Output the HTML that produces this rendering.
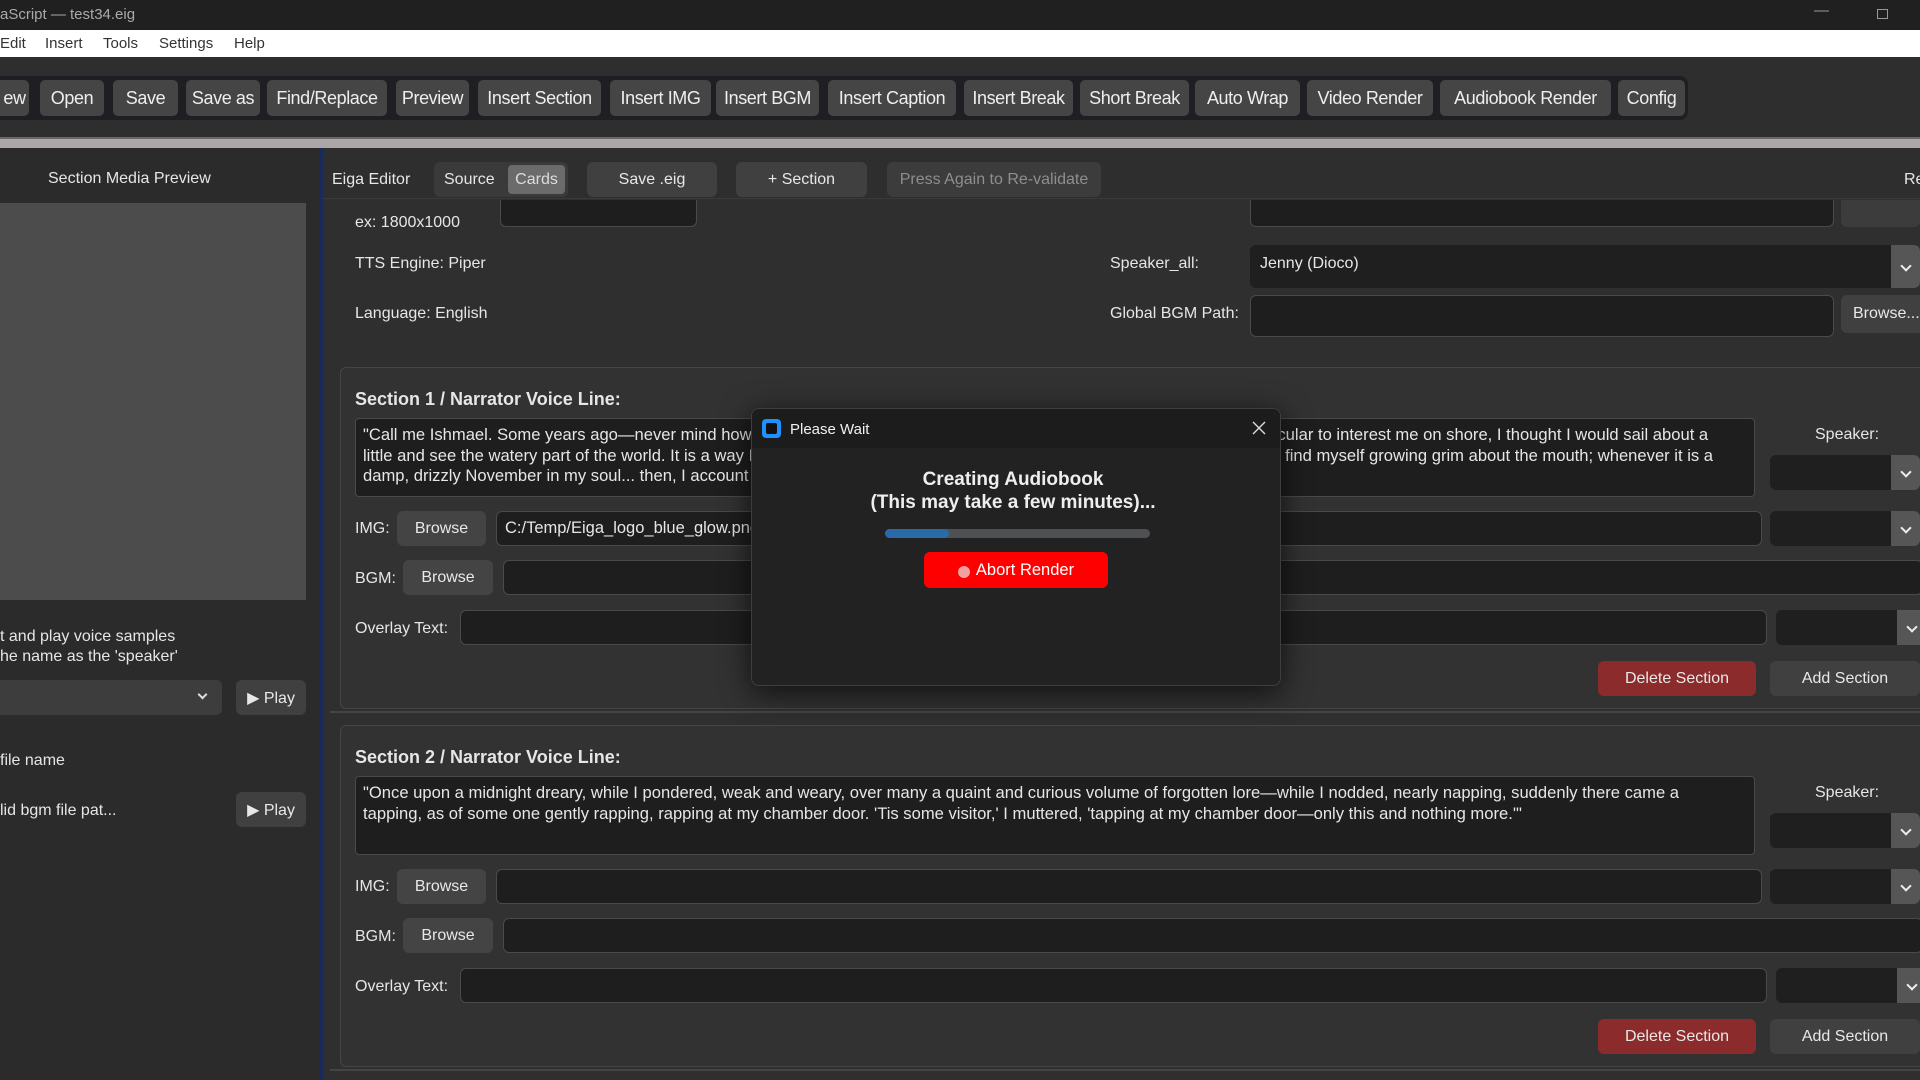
<!DOCTYPE html>
<html><head><meta charset="utf-8"><style>
*{box-sizing:border-box;margin:0;padding:0}
body{width:1920px;height:1080px;overflow:hidden;background:#2f2f2f;font-family:"Liberation Sans",sans-serif;color:#e6e6e6;position:relative}
.a{position:absolute}
.tb{position:absolute;top:80px;height:36px;background:#454545;border-radius:5px;color:#eee;font-size:18px;letter-spacing:-0.4px;display:flex;align-items:center;justify-content:center;white-space:nowrap}
.btn{position:absolute;background:#444;border-radius:6px;color:#e8e8e8;font-size:16px;display:flex;align-items:center;justify-content:center;white-space:nowrap}
.inp{position:absolute;background:#1e1e1e;border:1px solid #4a4a4a;border-radius:6px}
.dd{position:absolute;background:#1f1f1f;border-radius:6px;overflow:hidden}
.dd:after{content:"";position:absolute;right:0;top:0;width:29px;height:100%;background:#565656}
.dd:before{content:"";position:absolute;right:10px;top:50%;width:6px;height:6px;margin-top:-5px;border-right:2px solid #eee;border-bottom:2px solid #eee;transform:rotate(45deg);z-index:2}
.lbl{position:absolute;font-size:16px;color:#e6e6e6;white-space:nowrap}
.card{position:absolute;left:340px;width:1600px;height:342px;background:#323232;border:1px solid #464646;border-radius:6px}
.ta{position:absolute;background:#1e1e1e;border:1px solid #4a4a4a;border-radius:4px;font-size:16.6px;line-height:20.5px;padding:6px 7px;color:#e6e6e6;white-space:nowrap;overflow:hidden}
</style></head><body>
<div class="a" style="left:0;top:0;width:1920px;height:30px;background:#202020"></div>
<div class="lbl" style="left:0;top:6px;font-size:15px;color:#aaa">aScript — test34.eig</div>
<div class="lbl" style="left:1814px;top:2px;font-size:15px;color:#999">—</div>
<div class="a" style="left:1877px;top:9px;width:11px;height:10px;border:1px solid #999"></div>
<div class="a" style="left:0;top:30px;width:1920px;height:27px;background:#fff"></div>
<div class="lbl" style="left:0;top:35px;font-size:15px;color:#333">Edit</div>
<div class="lbl" style="left:45px;top:35px;font-size:15px;color:#333">Insert</div>
<div class="lbl" style="left:103px;top:35px;font-size:15px;color:#333">Tools</div>
<div class="lbl" style="left:159px;top:35px;font-size:15px;color:#333">Settings</div>
<div class="lbl" style="left:234px;top:35px;font-size:15px;color:#333">Help</div>
<div class="a" style="left:0;top:57px;width:1920px;height:80px;background:#2e2e2e"></div>
<div class="a" style="left:0;top:76px;width:1688px;height:44px;background:#1f1f23;border-radius:0 8px 8px 0"></div>
<div class="tb" style="left:0;width:29px;border-radius:0 5px 5px 0">ew</div>
<div class="tb" style="left:40px;width:64px">Open</div>
<div class="tb" style="left:113px;width:65px">Save</div>
<div class="tb" style="left:186px;width:74px">Save as</div>
<div class="tb" style="left:267px;width:120px">Find/Replace</div>
<div class="tb" style="left:396px;width:73px">Preview</div>
<div class="tb" style="left:478px;width:123px">Insert Section</div>
<div class="tb" style="left:610px;width:101px">Insert IMG</div>
<div class="tb" style="left:716px;width:103px">Insert BGM</div>
<div class="tb" style="left:828px;width:128px">Insert Caption</div>
<div class="tb" style="left:964px;width:109px">Insert Break</div>
<div class="tb" style="left:1080px;width:109px">Short Break</div>
<div class="tb" style="left:1195px;width:105px">Auto Wrap</div>
<div class="tb" style="left:1307px;width:126px">Video Render</div>
<div class="tb" style="left:1440px;width:171px">Audiobook Render</div>
<div class="tb" style="left:1618px;width:67px">Config</div>
<div class="a" style="left:0;top:137px;width:1920px;height:11px;background:#aca6a6;border-top:2px solid #6a6666"></div>
<!-- left panel -->
<div class="a" style="left:0;top:148px;width:320px;height:932px;background:#2b2b2b"></div>
<div class="a" style="left:320px;top:148px;width:3px;height:932px;background:#1a2a5e"></div>
<div class="lbl" style="left:48px;top:170px;font-size:16px">Section Media Preview</div>
<div class="a" style="left:0;top:203px;width:306px;height:397px;background:#4c4c4c"></div>
<div class="lbl" style="left:0;top:627px;line-height:20px">t and play voice samples<br>he name as the 'speaker'</div>
<div class="a" style="left:0;top:680px;width:222px;height:35px;background:#3d3d3d;border-radius:0 6px 6px 0"></div>
<div class="a" style="left:199px;top:691px;width:7px;height:7px;border-right:2px solid #ddd;border-bottom:2px solid #ddd;transform:rotate(45deg)"></div>
<div class="btn" style="left:236px;top:680px;width:70px;height:35px;background:#404040;font-size:16px">▶ Play</div>
<div class="lbl" style="left:0;top:752px">file name</div>
<div class="lbl" style="left:0;top:802px">lid bgm file pat...</div>
<div class="btn" style="left:236px;top:792px;width:70px;height:35px;background:#404040">▶ Play</div>
<!-- editor header -->
<div class="a" style="left:323px;top:148px;width:1597px;height:51px;background:#2e2e2e;border-bottom:1px solid #3a3a3a"></div>
<div class="lbl" style="left:332px;top:171px">Eiga Editor</div>
<div class="a" style="left:434px;top:162px;width:134px;height:35px;background:#3a3a3a;border-radius:6px"></div>
<div class="lbl" style="left:444px;top:171px">Source</div>
<div class="btn" style="left:508px;top:165px;width:57px;height:29px;background:#6b6b6b;border-radius:4px;color:#ddd">Cards</div>
<div class="btn" style="left:587px;top:162px;width:130px;height:35px;background:#404040">Save .eig</div>
<div class="btn" style="left:736px;top:162px;width:131px;height:35px;background:#404040">+ Section</div>
<div class="btn" style="left:887px;top:162px;width:214px;height:35px;background:#3c3c3c;color:#8e8e8e">Press Again to Re-validate</div>
<div class="lbl" style="left:1904px;top:171px">Re</div>
<!-- globals -->
<div class="lbl" style="left:355px;top:214px">ex: 1800x1000</div>
<div class="inp" style="left:500px;top:200px;width:197px;height:27px;border-top:none;border-radius:0 0 6px 6px"></div>
<div class="inp" style="left:1250px;top:200px;width:584px;height:27px;border-top:none;border-radius:0 0 6px 6px"></div>
<div class="a" style="left:1841px;top:200px;width:79px;height:27px;background:#3c3c3c;border-radius:0 0 6px 6px"></div>
<div class="lbl" style="left:355px;top:255px">TTS Engine: Piper</div>
<div class="lbl" style="left:1110px;top:255px">Speaker_all:</div>
<div class="dd" style="left:1250px;top:245px;width:670px;height:43px"></div>
<div class="lbl" style="left:1260px;top:255px">Jenny (Dioco)</div>
<div class="lbl" style="left:355px;top:305px">Language: English</div>
<div class="lbl" style="left:1110px;top:305px">Global BGM Path:</div>
<div class="inp" style="left:1250px;top:295px;width:584px;height:42px"></div>
<div class="btn" style="left:1841px;top:295px;width:90px;height:38px;background:#404040;justify-content:flex-start;padding-left:12px">Browse...</div>
<!-- section 1 -->
<div class="card" style="top:367px"></div>
<div class="lbl" style="left:355px;top:389px;font-size:18px;font-weight:bold">Section 1 / Narrator Voice Line:</div>
<div class="ta" style="left:355px;top:418px;width:1400px;height:79px">"Call me Ishmael. Some years ago—never mind how long precisely—having little or no money in my purse, and nothing particular to interest me on shore, I thought I would sail about a<br>little and see the watery part of the world. It is a way I have of driving off the spleen and regulating the circulation. Whenever I find myself growing grim about the mouth; whenever it is a<br>damp, drizzly November in my soul... then, I account it high time to get to sea as soon as I can.</div>
<div class="lbl" style="left:1815px;top:426px">Speaker:</div>
<div class="dd" style="left:1770px;top:455px;width:150px;height:35px"></div>
<div class="lbl" style="left:355px;top:520px">IMG:</div>
<div class="btn" style="left:397px;top:511px;width:89px;height:35px">Browse</div>
<div class="inp" style="left:496px;top:511px;width:1266px;height:35px"></div>
<div class="lbl" style="left:505px;top:519px;font-size:16.5px">C:/Temp/Eiga_logo_blue_glow.png</div>
<div class="dd" style="left:1770px;top:511px;width:150px;height:35px"></div>
<div class="lbl" style="left:355px;top:570px">BGM:</div>
<div class="btn" style="left:403px;top:560px;width:90px;height:35px">Browse</div>
<div class="inp" style="left:503px;top:560px;width:1420px;height:35px"></div>
<div class="lbl" style="left:355px;top:620px">Overlay Text:</div>
<div class="inp" style="left:460px;top:610px;width:1307px;height:35px"></div>
<div class="dd" style="left:1776px;top:610px;width:150px;height:35px"></div>
<div class="btn" style="left:1598px;top:661px;width:158px;height:35px;background:#8b2b2b">Delete Section</div>
<div class="btn" style="left:1770px;top:661px;width:150px;height:35px;background:#404040">Add Section</div>
<div class="a" style="left:330px;top:711px;width:1590px;height:2px;background:#444"></div>
<!-- section 2 -->
<div class="card" style="top:725px"></div>
<div class="lbl" style="left:355px;top:747px;font-size:18px;font-weight:bold">Section 2 / Narrator Voice Line:</div>
<div class="ta" style="left:355px;top:776px;width:1400px;height:79px">"Once upon a midnight dreary, while I pondered, weak and weary, over many a quaint and curious volume of forgotten lore—while I nodded, nearly napping, suddenly there came a<br>tapping, as of some one gently rapping, rapping at my chamber door. 'Tis some visitor,' I muttered, 'tapping at my chamber door—only this and nothing more.'"</div>
<div class="lbl" style="left:1815px;top:784px">Speaker:</div>
<div class="dd" style="left:1770px;top:813px;width:150px;height:35px"></div>
<div class="lbl" style="left:355px;top:878px">IMG:</div>
<div class="btn" style="left:397px;top:869px;width:89px;height:35px">Browse</div>
<div class="inp" style="left:496px;top:869px;width:1266px;height:35px"></div>
<div class="dd" style="left:1770px;top:869px;width:150px;height:35px"></div>
<div class="lbl" style="left:355px;top:928px">BGM:</div>
<div class="btn" style="left:403px;top:918px;width:90px;height:35px">Browse</div>
<div class="inp" style="left:503px;top:918px;width:1420px;height:35px"></div>
<div class="lbl" style="left:355px;top:978px">Overlay Text:</div>
<div class="inp" style="left:460px;top:968px;width:1307px;height:35px"></div>
<div class="dd" style="left:1776px;top:968px;width:150px;height:35px"></div>
<div class="btn" style="left:1598px;top:1019px;width:158px;height:35px;background:#8b2b2b">Delete Section</div>
<div class="btn" style="left:1770px;top:1019px;width:150px;height:35px;background:#404040">Add Section</div>
<div class="a" style="left:330px;top:1069px;width:1590px;height:2px;background:#444"></div>
<!-- dialog -->
<div class="a" style="left:751px;top:408px;width:530px;height:278px;background:#222;border:1px solid #3e3e3e;border-radius:8px;box-shadow:0 6px 30px rgba(0,0,0,.7);overflow:hidden">
 <div class="a" style="left:0;top:0;width:530px;height:39px;background:#1c1c1c"></div>
 <div class="a" style="left:10px;top:10px;width:19px;height:19px;background:#1e90ff;border-radius:4px"><div class="a" style="left:4px;top:4px;width:11px;height:11px;background:#111;border-radius:2px"></div></div>
 <div class="lbl" style="left:38px;top:12px;font-size:15px;color:#f0f0f0">Please Wait</div>
 <svg class="a" style="left:500px;top:12px" width="14" height="14"><path d="M1 1L13 13M13 1L1 13" stroke="#ddd" stroke-width="1.4"/></svg>
 <div class="lbl" style="left:0;width:522px;top:59px;text-align:center;font-size:19px;font-weight:bold;line-height:23px;color:#eee">Creating Audiobook<br>(This may take a few minutes)...</div>
 <div class="a" style="left:133px;top:120px;width:265px;height:9px;background:#4f5053;border-radius:5px"><div style="width:64px;height:9px;background:#2a6aa8;border-radius:5px"></div></div>
 <div class="a" style="left:172px;top:143px;width:184px;height:36px;background:#f00;border-radius:6px;display:flex;align-items:center;justify-content:center;font-size:16.5px;color:#fff"><span style="display:inline-block;width:12px;height:12px;border-radius:50%;background:#f2a0a0;margin-right:6px;margin-top:3px"></span>Abort Render</div>
</div>
</body></html>
